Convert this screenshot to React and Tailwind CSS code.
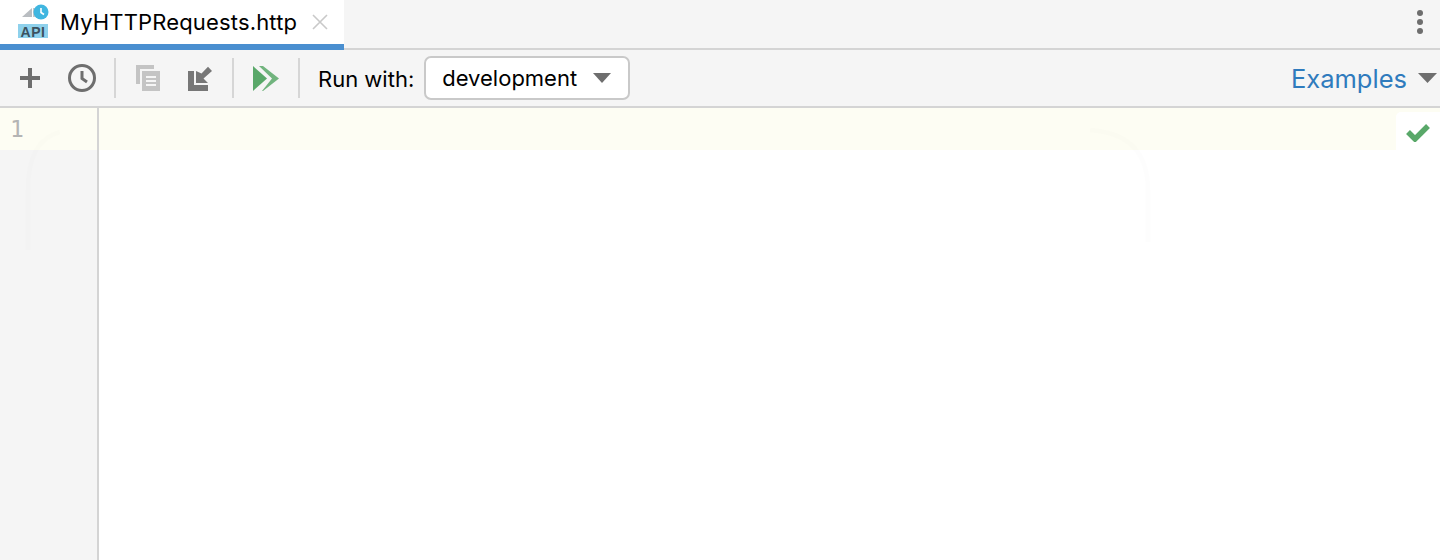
import React from "react";

const Sep = () => <div className="w-[2px] h-10 bg-[#d6d6d6] shrink-0" />;

function ApiIcon() {
  return (
    <svg width="32" height="34" viewBox="0 0 32 34" className="shrink-0 overflow-visible">
      <path d="M6 12 L16 3 V12 Z" fill="#b9bdc1" />
      <rect x="17" y="3" width="4" height="9" fill="#c4c8cb" />
      <circle cx="25" cy="7" r="7.5" fill="#40b6e0" />
      <path d="M25 3 V7.5 L28 9.5" stroke="#fff" strokeWidth="1.6" fill="none" />
      <rect x="2" y="19" width="30" height="14" fill="#8ed1ec" />
      <text x="17" y="31.5" textAnchor="middle" fontFamily="'Liberation Sans', sans-serif" fontWeight="700" fontSize="14" letterSpacing="0.6" fill="#3c5260">API</text>
    </svg>
  );
}

export default function App() {
  return (
    <div className="relative w-[1440px] h-[560px] bg-white flex flex-col overflow-hidden font-['Inter',sans-serif] text-black">
      <div className="h-[50px] shrink-0 flex bg-[#f5f5f5] border-b-2 border-[#d4d4d4]">
        <div className="w-[344px] h-[50px] bg-white border-b-[6px] border-[#4a8fd0] flex items-center pl-[16px] pr-[15px] -mb-[2px] shrink-0">
          <ApiIcon />
          <span className="ml-[12px] text-[22px] leading-[28px] tracking-[0.16px] whitespace-nowrap">MyHTTPRequests.http</span>
          <svg width="18" height="18" viewBox="0 0 18 18" className="ml-auto">
            <path d="M2 2 L16 16 M16 2 L2 16" stroke="#c9c9c9" strokeWidth="1.6" />
          </svg>
        </div>
        <div className="flex-1 flex justify-end items-start pt-[10px] pr-[17px]">
          <div className="flex flex-col gap-[3px]">
            <span className="w-[6px] h-[6px] rounded-full bg-[#6e6e6e]" />
            <span className="w-[6px] h-[6px] rounded-full bg-[#6e6e6e]" />
            <span className="w-[6px] h-[6px] rounded-full bg-[#6e6e6e]" />
          </div>
        </div>
      </div>

      <div className="h-[58px] shrink-0 flex items-center bg-[#f5f5f5] border-b-2 border-[#d4d4d4] pl-[18px] pr-[3px]">
        <svg width="24" height="24" viewBox="0 0 24 24" className="shrink-0">
          <path d="M12 2 V22 M2 12 H22" stroke="#6e6e6e" strokeWidth="4" />
        </svg>
        <svg width="30" height="30" viewBox="0 0 30 30" className="ml-[25px] shrink-0">
          <circle cx="15" cy="15" r="12.5" fill="none" stroke="#6e6e6e" strokeWidth="3" />
          <path d="M15 8 V15.5 L20 19" fill="none" stroke="#6e6e6e" strokeWidth="3" />
        </svg>
        <div className="ml-[17px]"><Sep /></div>
        <svg width="26" height="28" viewBox="0 0 26 28" className="ml-[19px] shrink-0">
          <path d="M1 1 H19 V5 H5 V20 H1 Z" fill="#c4c4c4" />
          <path fillRule="evenodd" d="M7 7 H25 V27 H7 Z M11 12 V14 H21 V12 Z M11 16 V18 H21 V16 Z M11 20 V22 H21 V20 Z" fill="#c4c4c4" />
        </svg>
        <svg width="24" height="25" viewBox="0 0 24 25" className="ml-[27px] shrink-0">
          <path d="M0 5 H6 V19 H20 V25 H0 Z" fill="#777777" />
          <path d="M8 5 V17 H20 L15.5 12.5 L24 5 L20 0.7 L13.5 7.5 Z" fill="#777777" />
        </svg>
        <div className="ml-[20px]"><Sep /></div>
        <svg width="26" height="25" viewBox="0 0 26 25" className="ml-[19px] shrink-0">
          <path d="M0 0 L14 12.5 L0 25 Z" fill="#59a869" />
          <path d="M6 0 H10 L26 12.5 L10 25 H9 L19 12.5 Z" fill="#59a869" opacity="0.85" />
        </svg>
        <div className="ml-[19px]"><Sep /></div>
        <span className="ml-[18px] mt-[1px] text-[22px] leading-[28px] whitespace-nowrap">Run with:</span>
        <div className="ml-[10px] w-[206px] h-[44px] shrink-0 bg-white border-2 border-[#c9c9c9] rounded-[7px] flex items-center pl-[16px] pr-[17px]">
          <span className="text-[22px] leading-[28px] whitespace-nowrap">development</span>
          <svg width="18" height="10" viewBox="0 0 18 10" className="ml-auto">
            <path d="M0 0 H18 L9 10 Z" fill="#6e6e6e" />
          </svg>
        </div>
        <span className="ml-auto mt-[2px] text-[25.5px] leading-[30px] text-[#2f7bbd] whitespace-nowrap">Examples</span>
        <svg width="19" height="10" viewBox="0 0 19 10" className="ml-[11px] shrink-0">
          <path d="M0 0 H19 L9.5 10 Z" fill="#6e6e6e" />
        </svg>
      </div>

      <div className="flex-1 flex min-h-0">
        <div className="w-[99px] shrink-0 bg-[#f5f5f5] border-r-2 border-[#d4d4d4]">
          <div className="h-[42px] bg-[#fdfdf3] pl-[10px] flex items-center font-['DejaVu_Sans_Mono',monospace] text-[23px] text-[#b4b4b4]">1</div>
        </div>
        <div className="flex-1">
          <div className="h-[42px] bg-[#fdfdf3]" />
        </div>
        <div className="w-[44px] shrink-0">
          <div className="h-[42px] bg-[#fdfdf3] flex items-end">
            <div className="w-full h-[38px] bg-white rounded-tl-[5px] flex justify-center pt-[10px]">
              <svg width="24" height="20" viewBox="0 0 24 20" className="shrink-0">
                <path d="M2 10 L9 17 L22 4" fill="none" stroke="#59a869" strokeWidth="5.5" />
              </svg>
            </div>
          </div>
        </div>
      </div>

      <svg width="1440" height="560" viewBox="0 0 1440 560" className="absolute inset-0 pointer-events-none">
        <path d="M28 250 V190 Q28 140 60 132 M1090 130 Q1148 134 1148 190 V242" fill="none" stroke="#000000" strokeOpacity="0.008" strokeWidth="5" />
      </svg>
    </div>
  );
}
